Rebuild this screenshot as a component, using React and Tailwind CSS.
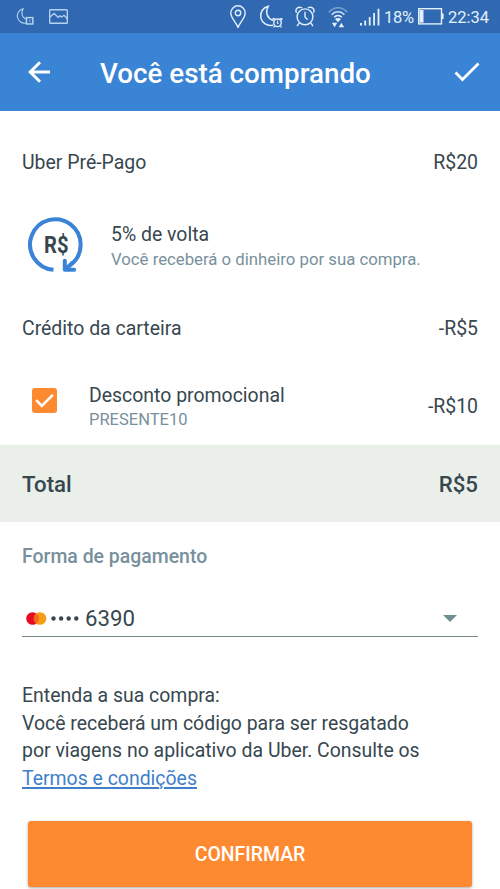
const MoonClock = ({ className, face }) => (
  <svg viewBox="0 0 23 23" fill="none" stroke="currentColor" className={className}>
    <path
      d="M13 20.3A9.6 9.6 0 1 1 8.8 1.2C5.4 7.6 8 13.6 13.2 15.2"
      strokeWidth="1.5"
      strokeLinecap="round"
    />
    {face === "square" ? (
      <rect x="13.5" y="13" width="8.6" height="8.6" strokeWidth="2" />
    ) : (
      <>
        <circle cx="18" cy="17.8" r="3.8" strokeWidth="1.4" />
        <path d="M13.7 15.2v-1.6h2M22.2 15.2v-1.6h-2M15 21.2l-1 1.2M21 21.2l1 1.2" strokeWidth="1.4" />
      </>
    )}
    <path d="M18 15.8v2.3l1 .8" strokeWidth="1.2" />
  </svg>
);

const PictureIcon = () => (
  <svg viewBox="0 0 19 15" fill="none" stroke="currentColor" className="h-[15px] w-[19px]">
    <rect x=".7" y=".7" width="17.6" height="13.6" rx=".8" strokeWidth="1.4" />
    <path d="M1 8l4.2-3.6 4 4 1.8-1.6 1.7 1.2L15 6.3l3.2 3.2" strokeWidth="1.4" />
  </svg>
);

const PinIcon = () => (
  <svg viewBox="0 0 16 24" fill="none" stroke="currentColor" className="h-6 w-4">
    <path
      d="M8 22.5C6 17.2.8 13 .8 8a7.2 7.2 0 0 1 14.4 0c0 5-5.2 9.2-7.2 14.5Z"
      strokeWidth="1.4"
      strokeLinejoin="round"
    />
    <circle cx="8" cy="8" r="2.7" strokeWidth="1.4" />
  </svg>
);

const AlarmIcon = () => (
  <svg
    viewBox="0 0 20 21"
    fill="none"
    stroke="currentColor"
    strokeWidth="1.4"
    strokeLinecap="round"
    className="h-[21px] w-5"
  >
    <circle cx="10" cy="10.8" r="7.9" />
    <path d="M10 6.2v4.8l2.2 2.2M4 17.3l-1.7 2.4M16 17.3l1.7 2.4" />
    <path d="M1.3 6.3C-.1 3.2 3 .2 6.6 1.7M18.7 6.3C20.1 3.2 17 .2 13.4 1.7" />
  </svg>
);

const WifiIcon = () => (
  <svg viewBox="0 0 20 21" fill="none" stroke="currentColor" className="h-[21px] w-5">
    <path d="M.8 5.2C6-.8 14-.8 19.2 5.2" strokeWidth="1.5" opacity=".4" />
    <path d="M3.6 7.8C7 3.7 13 3.7 16.4 7.8" strokeWidth="1.5" opacity=".85" />
    <path d="M6.2 10.3c2-2.4 5.6-2.4 7.6 0" strokeWidth="1.5" />
    <path
      d="M7 12c1.6-1.5 4.4-1.5 6 0L10 15.2ZM3.9 15.8h5.4l-2.7 4.4ZM10.7 20.2h5.4l-2.7-4.4Z"
      fill="currentColor"
      stroke="none"
    />
  </svg>
);

const SignalIcon = () => (
  <svg viewBox="0 0 20 18" fill="currentColor" className="h-[18px] w-5">
    <path d="M0 15h2v2.5H0ZM4.3 12.5h1.8v5H4.3ZM8.8 9h1.8v8.5H8.8ZM13.2 5H15v12.5h-1.8ZM17.6.7h1.8v16.8h-1.8Z" />
  </svg>
);

const BatteryIcon = () => (
  <svg viewBox="0 0 26 17" fill="currentColor" className="h-[17px] w-[26px]">
    <rect x=".7" y=".7" width="22.8" height="15.2" fill="none" stroke="currentColor" strokeWidth="1.4" />
    <rect x="1.5" y="2" width="4" height="12.6" />
    <rect x="24" y="5.5" width="1.6" height="5.5" />
  </svg>
);

const CashbackIcon = () => (
  <svg viewBox="0 0 56 56" className="h-14 w-14">
    <path
      d="M25.5 52.8A25.3 25.3 0 1 1 42 48.2"
      fill="none"
      stroke="#3a83d6"
      strokeWidth="4"
    />
    <path
      d="M36.8 43.8v8.9h9.4M37.5 52.2l6.5-6"
      fill="none"
      stroke="#3a83d6"
      strokeWidth="4"
      strokeLinecap="round"
      strokeLinejoin="round"
    />
    <text
      x="16"
      y="36"
      textLength="24.5"
      lengthAdjust="spacingAndGlyphs"
      className="fill-[#37474f] text-[24.5px] font-bold"
    >
      R$
    </text>
  </svg>
);

const StatusBar = () => (
  <div className="flex h-[33px] items-center justify-between bg-[#3069b2] pl-4 pr-[11px] text-[#e1f0fb]">
    <div className="flex items-center gap-[15px] text-[#b5d3f0]">
      <MoonClock face="square" className="h-[17px] w-[18px]" />
      <PictureIcon />
    </div>
    <div className="flex items-center">
      <PinIcon />
      <MoonClock className="ml-[13px] h-[23px] w-[24px]" />
      <span className="ml-3">
        <AlarmIcon />
      </span>
      <span className="ml-[13px] mt-0.5">
        <WifiIcon />
      </span>
      <span className="ml-3">
        <SignalIcon />
      </span>
      <span className="ml-1 mt-0.5 w-[31px] whitespace-nowrap text-[16.5px] tracking-[-0.3px]">18%</span>
      <span className="ml-[3px]">
        <BatteryIcon />
      </span>
      <span className="ml-1 mt-0.5 w-[41px] whitespace-nowrap text-[16.5px]">22:34</span>
    </div>
  </div>
);

const Header = () => (
  <header className="flex h-[78px] items-center bg-[#3984d4] pl-7 pr-5 text-white">
    <svg viewBox="0 0 22 22" fill="none" stroke="currentColor" strokeWidth="3" className="h-[22px] w-[22px]">
      <path d="M22 11H2.2M12 1.2L2.2 11l9.8 9.8" />
    </svg>
    <h1 className="ml-[50px] flex-1 pt-[3px] text-[27.78px] font-medium leading-8">Você está comprando</h1>
    <svg viewBox="0 0 26 20" fill="none" stroke="currentColor" strokeWidth="2.8" className="h-5 w-[26px]">
      <path d="M1.5 10.5l7 7L24.5 1.5" />
    </svg>
  </header>
);

export default function App() {
  return (
    <div className="h-[889px] w-[500px] overflow-hidden bg-white font-['Roboto',sans-serif] text-[19.44px] leading-6 text-[#37474f]">
      <StatusBar />
      <Header />

      <div className="flex h-[102px] items-center justify-between px-[22px] pt-0.5">
        <span>Uber Pré-Pago</span>
        <span>R$20</span>
      </div>

      <div className="flex h-[77px] pl-7">
        <div className="mt-[4px]">
          <CashbackIcon />
        </div>
        <div className="ml-[27px] mt-[10px]">
          <p>5% de volta</p>
          <p className="text-[16.75px] text-[#78909c]">Você receberá o dinheiro por sua compra.</p>
        </div>
      </div>

      <div className="flex h-[77px] items-center justify-between px-[22px] pt-px">
        <span>Crédito da carteira</span>
        <span>-R$5</span>
      </div>

      <div className="flex h-[78px] items-center pl-8 pr-[22px]">
        <div className="-mt-3 flex h-[25px] w-[25px] items-center justify-center rounded-[3px] bg-[#fd8930]">
          <svg viewBox="0 0 19 15" fill="none" stroke="white" strokeWidth="2.6" className="h-[15px] w-[19px]">
            <path d="M1.2 7.2l5.6 5.6L17.8 1.8" />
          </svg>
        </div>
        <div className="ml-8 flex-1 pt-1">
          <p>Desconto promocional</p>
          <p className="text-[16.5px] text-[#78909c]">PRESENTE10</p>
        </div>
        <span className="pt-0.5">-R$10</span>
      </div>

      <div className="flex h-[77px] items-center justify-between bg-[#eaefe9] px-[22px] text-[22.22px] font-medium">
        <span>Total</span>
        <span>R$5</span>
      </div>

      <div className="px-[22px] pt-[23px]">
        <p className="font-medium text-[#78909c]">Forma de pagamento</p>
        <div className="mt-[31px] flex h-[37px] items-center border-b border-[#78868c] pl-1 pr-[21px]">
          <svg viewBox="0 0 21 13" className="h-[13px] w-[21px]">
            <circle cx="6.5" cy="6.5" r="6.3" fill="#e50b21" />
            <circle cx="14" cy="6.5" r="6.3" fill="#f79c14" />
            <path d="M10.2 1.4a6.3 6.3 0 0 1 0 10.2a6.3 6.3 0 0 1 0-10.2Z" fill="#f4641b" />
          </svg>
          <svg viewBox="0 0 28 5" fill="currentColor" className="ml-[4px] h-[5px] w-7">
            <circle cx="2.5" cy="2.5" r="2.2" />
            <circle cx="10.1" cy="2.5" r="2.2" />
            <circle cx="17.7" cy="2.5" r="2.2" />
            <circle cx="25.3" cy="2.5" r="2.2" />
          </svg>
          <span className="ml-[6px] flex-1 text-[22.22px]">6390</span>
          <svg viewBox="0 0 14 7" className="mt-px h-[7px] w-[14px] fill-[#6f8f92]">
            <path d="M0 0h14L7 7Z" />
          </svg>
        </div>
      </div>

      <div className="px-[22px] pt-[45px] leading-[27.5px]">
        <p>Entenda a sua compra:</p>
        <p>
          Você receberá um código para ser resgatado
          <br />
          por viagens no aplicativo da Uber. Consulte os
          <br />
          <a href="#" className="text-[#3f80cb] underline decoration-[1.5px] underline-offset-2">
            Termos e condições
          </a>
        </p>
      </div>

      <div className="px-7 pt-[29px]">
        <button className="h-[66px] w-full rounded-[3px] bg-[#fd8930] pt-0.5 font-medium text-white shadow-[0_1px_3px_rgba(0,0,0,0.35)]">
          CONFIRMAR
        </button>
      </div>
    </div>
  );
}
